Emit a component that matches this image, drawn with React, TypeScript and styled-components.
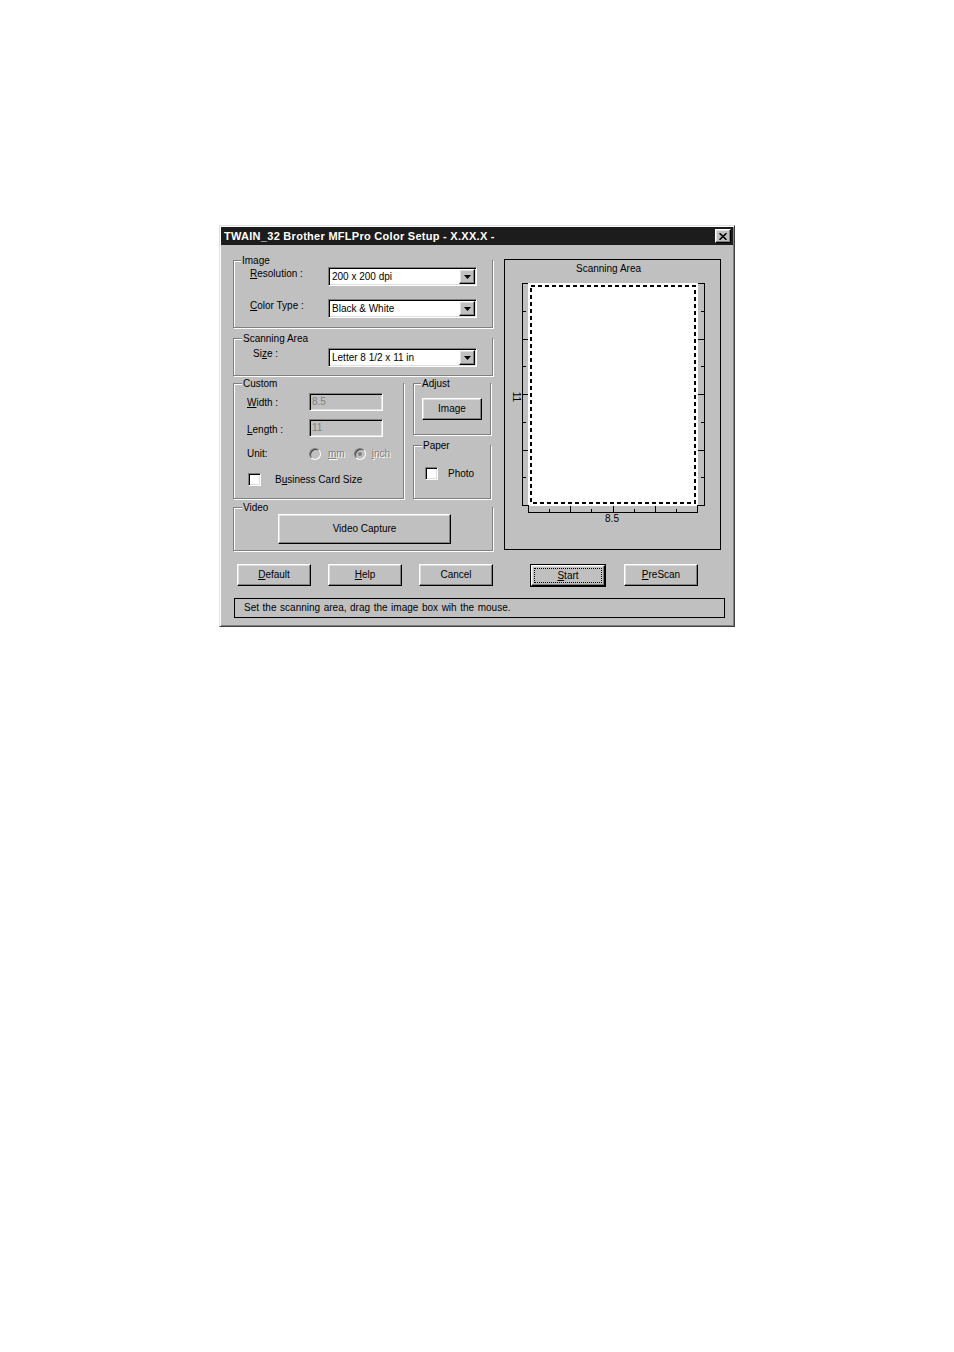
import React from "react";
import styled, { createGlobalStyle, css } from "styled-components";

const GlobalStyle = createGlobalStyle`
  html, body { margin: 0; padding: 0; background: #ffffff; }
  body { font-family: "Liberation Sans", Arial, sans-serif; }
  * { box-sizing: border-box; }
`;

const raised = css`
  background: #c0c0c0;
  border: 1px solid;
  border-color: #ffffff #000000 #000000 #ffffff;
  box-shadow: inset -1px -1px 0 #808080, inset 1px 1px 0 #dfdfdf;
`;

const sunken = css`
  border: 1px solid;
  border-color: #808080 #ffffff #ffffff #808080;
  box-shadow: inset 1px 1px 0 #000000, inset -1px -1px 0 #dfdfdf;
`;

const Page = styled.div`
  padding: 225px 0 0 219px;
  min-height: 1352px;
`;

const Dialog = styled.div`
  width: 516px;
  height: 402px;
  background: #c0c0c0;
  border: 1px solid;
  border-color: #dfdfdf #404040 #404040 #dfdfdf;
  box-shadow: inset 1px 1px 0 #ffffff, inset -1px -1px 0 #808080;
  padding: 1px;
  display: flex;
  flex-direction: column;
  font-size: 10px;
  line-height: 12px;
  color: #000;
`;

const TitleBar = styled.div`
  height: 18px;
  background: #1c1c1c;
  display: flex;
  align-items: center;
  justify-content: space-between;
  padding: 0 2px 0 3px;
`;

const TitleText = styled.span`
  color: #ffffff;
  font-weight: bold;
  font-size: 11px;
  letter-spacing: 0.28px;
  white-space: nowrap;
`;

const CloseButton = styled.span`
  ${raised};
  width: 16px;
  height: 14px;
  display: flex;
  align-items: center;
  justify-content: center;
`;

const Body = styled.div`
  padding: 14px 12px 0 12px;
  display: grid;
  grid-template-columns: 260px 217px;
  column-gap: 11px;
  align-items: start;
`;

const LeftColumn = styled.div`
  padding-top: 1px;
  display: flex;
  flex-direction: column;
`;

const Group = styled.div<{ $h: number; $w?: number; $mt?: number }>`
  height: ${(p) => p.$h}px;
  width: ${(p) => (p.$w ? `${p.$w}px` : "auto")};
  margin-top: ${(p) => p.$mt ?? 0}px;
  border: 1px solid #808080;
  box-shadow: inset 1px 1px 0 #ffffff, 1px 1px 0 #ffffff;
  display: flex;
  flex-direction: column;
`;

const Caption = styled.span<{ $ml?: number }>`
  display: table;
  margin: -6px 0 0 ${(p) => p.$ml ?? 7}px;
  padding: 0 1px;
  line-height: 12px;
  background: #c0c0c0;
`;

const GroupBody = styled.div<{ $pt: number; $pl: number; $gap?: number }>`
  padding: ${(p) => p.$pt}px 0 0 ${(p) => p.$pl}px;
  display: flex;
  flex-direction: column;
  gap: ${(p) => p.$gap ?? 0}px;
`;

const FieldRow = styled.div<{ $label: number; $mt?: number }>`
  display: grid;
  grid-template-columns: ${(p) => p.$label}px auto;
  align-items: start;
  margin-top: ${(p) => p.$mt ?? 0}px;
`;

const FieldLabel = styled.span<{ $mt?: number }>`
  margin-top: ${(p) => p.$mt ?? 1}px;
  white-space: nowrap;
`;

const U = styled.span`
  text-decoration: underline;
  text-underline-offset: 1px;
`;

const Combo = styled.div`
  ${sunken};
  width: 149px;
  height: 19px;
  background: #ffffff;
  padding: 1px;
  display: flex;
  align-items: center;
`;

const ComboText = styled.span`
  flex: 1;
  padding-left: 2px;
  line-height: 15px;
  white-space: nowrap;
`;

const DropButton = styled.span`
  ${raised};
  width: 16px;
  height: 15px;
  display: flex;
  align-items: center;
  justify-content: center;
`;

const Edit = styled.div`
  ${sunken};
  width: 74px;
  height: 18px;
  background: #c0c0c0;
  color: #808080;
  padding-left: 2px;
  line-height: 16px;
`;

const Disabled = styled.span<{ $ml: number }>`
  margin-left: ${(p) => p.$ml}px;
  color: #808080;
  text-shadow: 1px 1px 0 #ffffff;
`;

const Radio = styled.span<{ $checked?: boolean; $ml?: number }>`
  width: 12px;
  height: 12px;
  margin-left: ${(p) => p.$ml ?? 0}px;
  border-radius: 50%;
  border: 1px solid;
  border-color: #808080 #ffffff #ffffff #808080;
  background: #c0c0c0;
  box-shadow: inset 1px 1px 0 #404040;
  display: flex;
  align-items: center;
  justify-content: center;
  &::after {
    content: "";
    width: 4px;
    height: 4px;
    border-radius: 50%;
    background: ${(p) => (p.$checked ? "#808080" : "transparent")};
  }
`;

const UnitRow = styled.div`
  display: flex;
  align-items: center;
  height: 12px;
  margin-top: 11px;
`;

const UnitLabel = styled.span`
  width: 62px;
`;

const Check = styled.span`
  ${sunken};
  width: 13px;
  height: 13px;
  background: #ffffff;
  flex: none;
`;

const CheckRow = styled.div<{ $gap: number; $mt?: number; $ml?: number }>`
  display: flex;
  align-items: center;
  gap: ${(p) => p.$gap}px;
  margin-top: ${(p) => p.$mt ?? 0}px;
  margin-left: ${(p) => p.$ml ?? 0}px;
`;

const Split = styled.div`
  margin-top: 7px;
  display: flex;
  gap: 9px;
`;

const SubColumn = styled.div`
  display: flex;
  flex-direction: column;
  gap: 10px;
`;

const Button = styled.span<{ $w: number; $h: number; $ml?: number }>`
  ${raised};
  width: ${(p) => p.$w}px;
  height: ${(p) => p.$h}px;
  margin-left: ${(p) => p.$ml ?? 0}px;
  display: flex;
  align-items: center;
  justify-content: center;
  white-space: nowrap;
  flex: none;
`;

const DefaultButton = styled.span<{ $ml: number }>`
  width: 76px;
  height: 23px;
  margin-left: ${(p) => p.$ml}px;
  border: 1px solid #000;
  flex: none;
  display: flex;
`;

const DefaultInner = styled.span`
  ${raised};
  flex: 1;
  padding: 2px;
  display: flex;
`;

const FocusRing = styled.span`
  flex: 1;
  border: 1px dotted #000;
  display: flex;
  align-items: center;
  justify-content: center;
`;

const Panel = styled.div`
  height: 291px;
  border: 1px solid #000;
  display: flex;
  flex-direction: column;
`;

const PanelTitle = styled.div`
  height: 18px;
  line-height: 18px;
  text-align: center;
  padding-right: 8px;
`;

const RulerSvg = styled.svg`
  display: block;
`;

const ButtonRow = styled.div`
  margin-top: 13px;
  padding-left: 16px;
  display: flex;
  align-items: flex-start;
`;

const StatusBar = styled.div`
  margin: 11px 0 0 13px;
  width: 491px;
  height: 20px;
  border: 1px solid #000;
  padding-left: 9px;
  line-height: 18px;
  word-spacing: 0.8px;
  white-space: nowrap;
`;

const Arrow = () => (
  <svg width="7" height="4" viewBox="0 0 7 4">
    <polygon points="0,0 7,0 3.5,4" fill="#000" />
  </svg>
);

const tickYs = Array.from({ length: 9 }, (_, k) => 5.5 + k * 27.75);
const tickXs = Array.from({ length: 9 }, (_, k) => 23.5 + k * 21.125);

const Ruler = () => (
  <RulerSvg width="215" height="271" viewBox="0 0 215 271">
    <rect x="23" y="5" width="170" height="223" fill="#ffffff" />
    <rect
      x="26"
      y="8"
      width="164"
      height="217"
      fill="none"
      stroke="#000"
      strokeWidth="2"
      strokeDasharray="4 3"
    />
    <g stroke="#000" strokeWidth="1" fill="none" shapeRendering="crispEdges">
      <line x1="17.5" y1="5" x2="17.5" y2="228" />
      <line x1="199.5" y1="5" x2="199.5" y2="228" />
      <line x1="23" y1="234.5" x2="193" y2="234.5" />
      {tickYs.map((y, k) => (
        <React.Fragment key={`y${k}`}>
          <line x1="17" y1={y} x2={k % 2 === 0 ? 23 : 21} y2={y} />
          <line x1="200" y1={y} x2={k % 2 === 0 ? 193 : 196} y2={y} />
        </React.Fragment>
      ))}
      {tickXs.map((x, k) => (
        <line
          key={`x${k}`}
          x1={x}
          y1="235"
          x2={x}
          y2={k === 0 || k === 8 ? 227 : k % 2 === 0 ? 228 : 231}
        />
      ))}
    </g>
    <text
      x="107"
      y="244"
      fontSize="10"
      fontFamily='"Liberation Sans", Arial, sans-serif'
      textAnchor="middle"
      fill="#000"
    >
      8.5
    </text>
    <text
      x="11"
      y="119"
      fontSize="10"
      fontFamily='"Liberation Sans", Arial, sans-serif'
      textAnchor="middle"
      dominantBaseline="central"
      transform="rotate(90 11 119)"
      fill="#000"
    >
      11
    </text>
  </RulerSvg>
);

export default function App() {
  return (
    <>
      <GlobalStyle />
      <Page>
        <Dialog>
          <TitleBar>
            <TitleText>TWAIN_32 Brother MFLPro Color Setup - X.XX.X -</TitleText>
            <CloseButton aria-label="Close">
              <svg width="8" height="7" viewBox="0 0 8 7">
                <path d="M0.5 0.2 L7.5 6.8 M7.5 0.2 L0.5 6.8" stroke="#000" strokeWidth="1.6" />
              </svg>
            </CloseButton>
          </TitleBar>
          <Body>
            <LeftColumn>
              <Group $h={68}>
                <Caption $ml={7}>Image</Caption>
                <GroupBody $pt={0} $pl={16} $gap={13}>
                  <FieldRow $label={78}>
                    <FieldLabel>
                      <U>R</U>esolution :
                    </FieldLabel>
                    <Combo>
                      <ComboText>200 x 200 dpi</ComboText>
                      <DropButton>
                        <Arrow />
                      </DropButton>
                    </Combo>
                  </FieldRow>
                  <FieldRow $label={78}>
                    <FieldLabel>
                      <U>C</U>olor Type :
                    </FieldLabel>
                    <Combo>
                      <ComboText>Black &amp; White</ComboText>
                      <DropButton>
                        <Arrow />
                      </DropButton>
                    </Combo>
                  </FieldRow>
                </GroupBody>
              </Group>

              <Group $h={38} $mt={10}>
                <Caption $ml={8}>Scanning Area</Caption>
                <GroupBody $pt={3} $pl={19}>
                  <FieldRow $label={75}>
                    <FieldLabel $mt={0}>
                      Si<U>z</U>e :
                    </FieldLabel>
                    <Combo>
                      <ComboText>Letter 8 1/2 x 11 in</ComboText>
                      <DropButton>
                        <Arrow />
                      </DropButton>
                    </Combo>
                  </FieldRow>
                </GroupBody>
              </Group>

              <Split>
                <Group $h={116} $w={171}>
                  <Caption $ml={8}>Custom</Caption>
                  <GroupBody $pt={3} $pl={13}>
                    <FieldRow $label={62}>
                      <FieldLabel $mt={4}>
                        <U>W</U>idth :
                      </FieldLabel>
                      <Edit>8.5</Edit>
                    </FieldRow>
                    <FieldRow $label={62} $mt={8}>
                      <FieldLabel $mt={5}>
                        <U>L</U>ength :
                      </FieldLabel>
                      <Edit>11</Edit>
                    </FieldRow>
                    <UnitRow>
                      <UnitLabel>Unit:</UnitLabel>
                      <Radio />
                      <Disabled $ml={7}>
                        <U>m</U>m
                      </Disabled>
                      <Radio $checked $ml={9} />
                      <Disabled $ml={6}>
                        <U>i</U>nch
                      </Disabled>
                    </UnitRow>
                    <CheckRow $gap={14} $mt={13} $ml={1}>
                      <Check />
                      <span>
                        B<U>u</U>siness Card Size
                      </span>
                    </CheckRow>
                  </GroupBody>
                </Group>
                <SubColumn>
                  <Group $h={52} $w={78}>
                    <Caption $ml={7}>Adjust</Caption>
                    <GroupBody $pt={8} $pl={8}>
                      <Button $w={60} $h={22}>
                        Image
                      </Button>
                    </GroupBody>
                  </Group>
                  <Group $h={54} $w={78}>
                    <Caption $ml={8}>Paper</Caption>
                    <GroupBody $pt={15} $pl={11}>
                      <CheckRow $gap={10}>
                        <Check />
                        <span>Photo</span>
                      </CheckRow>
                    </GroupBody>
                  </Group>
                </SubColumn>
              </Split>

              <Group $h={44} $mt={8}>
                <Caption $ml={8}>Video</Caption>
                <GroupBody $pt={0} $pl={44}>
                  <Button $w={173} $h={30}>
                    Video Capture
                  </Button>
                </GroupBody>
              </Group>
            </LeftColumn>

            <Panel>
              <PanelTitle>Scanning Area</PanelTitle>
              <Ruler />
            </Panel>
          </Body>

          <ButtonRow>
            <Button $w={74} $h={22}>
              <span>
                <U>D</U>efault
              </span>
            </Button>
            <Button $w={74} $h={22} $ml={17}>
              <span>
                <U>H</U>elp
              </span>
            </Button>
            <Button $w={74} $h={22} $ml={17}>
              Cancel
            </Button>
            <DefaultButton $ml={37}>
              <DefaultInner>
                <FocusRing>
                  <span>
                    <U>S</U>tart
                  </span>
                </FocusRing>
              </DefaultInner>
            </DefaultButton>
            <Button $w={74} $h={22} $ml={18}>
              <span>
                <U>P</U>reScan
              </span>
            </Button>
          </ButtonRow>

          <StatusBar>Set the scanning area, drag the image box wih the mouse.</StatusBar>
        </Dialog>
      </Page>
    </>
  );
}
